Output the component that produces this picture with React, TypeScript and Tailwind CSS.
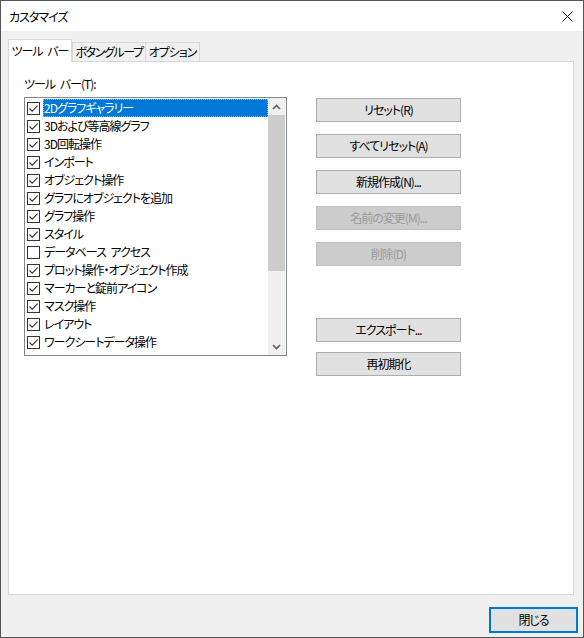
const FONT = "font-['Noto_Sans_CJK_JP','Noto_Sans',sans-serif] [font-feature-settings:'palt'] tracking-[-1px] [word-spacing:3px]";

type Item = { label: string; checked: boolean };

const ITEMS: Item[] = [
  { label: "2Dグラフギャラリー", checked: true },
  { label: "3Dおよび等高線グラフ", checked: true },
  { label: "3D回転操作", checked: true },
  { label: "インポート", checked: true },
  { label: "オブジェクト操作", checked: true },
  { label: "グラフにオブジェクトを追加", checked: true },
  { label: "グラフ操作", checked: true },
  { label: "スタイル", checked: true },
  { label: "データベース アクセス", checked: false },
  { label: "プロット操作・オブジェクト作成", checked: true },
  { label: "マーカーと錠前アイコン", checked: true },
  { label: "マスク操作", checked: true },
  { label: "レイアウト", checked: true },
  { label: "ワークシートデータ操作", checked: true },
];

function CheckBox({ checked }: { checked: boolean }) {
  return (
    <span className="flex h-[13px] w-[13px] shrink-0 items-center justify-center border border-[#333333] bg-white">
      {checked && (
        <svg width="11" height="11" viewBox="0 0 11 11" aria-hidden>
          <path d="M1.5 5.5 L4.2 8.2 L9.6 2.6" stroke="#333333" strokeWidth="1.1" fill="none" />
        </svg>
      )}
    </span>
  );
}

function Button({ label, disabled = false }: { label: string; disabled?: boolean }) {
  return (
    <div
      className={
        disabled
          ? "flex h-[24px] w-[145px] items-center justify-center whitespace-nowrap border border-[#bfbfbf] bg-[#cccccc] text-[12px] text-[#9a9a9a]"
          : "flex h-[24px] w-[145px] items-center justify-center whitespace-nowrap border border-[#adadad] bg-[#e1e1e1] text-[12px] text-black"
      }
    >
      {label}
    </div>
  );
}

function ScrollBar() {
  return (
    <div className="flex h-full w-[17px] shrink-0 flex-col bg-[#f0f0f0]">
      <div className="flex h-[17px] items-center justify-center">
        <svg width="9" height="6" viewBox="0 0 9 6" aria-hidden>
          <path d="M1 5 L4.5 1.5 L8 5" stroke="#606060" strokeWidth="1.6" fill="none" />
        </svg>
      </div>
      <div className="h-[156px] bg-[#cdcdcd]" />
      <div className="flex-1" />
      <div className="flex h-[17px] items-center justify-center">
        <svg width="9" height="6" viewBox="0 0 9 6" aria-hidden>
          <path d="M1 1 L4.5 4.5 L8 1" stroke="#606060" strokeWidth="1.6" fill="none" />
        </svg>
      </div>
    </div>
  );
}

export default function App() {
  return (
    <div className={`flex h-[638px] w-[584px] flex-col border border-[#555555] bg-[#f0f0f0] text-[12px] text-black ${FONT}`}>
      {/* title bar */}
      <div className="flex h-[30px] shrink-0 items-center justify-between bg-white pl-[8px] pr-[10px]">
        <span className="leading-[15px]">カスタマイズ</span>
        <svg width="11" height="11" viewBox="0 0 11 11" aria-hidden>
          <path d="M0.5 0.5 L10.5 10.5 M10.5 0.5 L0.5 10.5" stroke="#111111" strokeWidth="1" fill="none" />
        </svg>
      </div>

      <div className="flex flex-1 flex-col pt-[8px]">
        {/* tabs */}
        <div className="ml-[7px] flex h-[22px] items-end whitespace-nowrap">
          <div className="relative z-10 -mb-px flex h-[23px] w-[64px] items-center justify-center border border-b-0 border-[#d9d9d9] bg-white pb-[1px]">
            ツール バー
          </div>
          <div className="flex h-[19px] w-[74px] items-center justify-center border border-b-0 border-[#d9d9d9] tracking-[-1.4px]">
            ボタングループ
          </div>
          <div className="flex h-[19px] w-[54px] items-center justify-center border border-b-0 border-l-0 border-[#d9d9d9]">
            オプション
          </div>
        </div>

        {/* panel */}
        <div className="ml-[7px] h-[534px] w-[566px] border border-[#d9d9d9] bg-white pl-[15px] pt-[14px]">
          <div className="mb-[6px] leading-[15px]">ツール バー(T):</div>
          <div className="flex items-start">
            <div className="flex h-[259px] w-[263px] border border-[#828790] bg-white pr-[1px]">
              <div className="flex flex-1 flex-col overflow-hidden pl-[2px] pt-[1px]">
                {ITEMS.map((item, i) => (
                  <div key={item.label} className="flex h-[18px] shrink-0 items-center gap-[3px] whitespace-nowrap">
                    <CheckBox checked={item.checked} />
                    <span
                      className={
                        i === 0
                          ? "flex h-[18px] flex-1 items-center bg-[#0078d7] pl-[1px] text-white outline-1 -outline-offset-1 outline-dotted outline-[#f0a040]"
                          : "flex h-[18px] flex-1 items-center pl-[1px]"
                      }
                    >
                      {item.label}
                    </span>
                  </div>
                ))}
              </div>
              <ScrollBar />
            </div>

            <div className="ml-[29px] flex flex-col pt-[1px]">
              <div className="flex flex-col gap-[12px]">
                <Button label="リセット(R)" />
                <Button label="すべてリセット(A)" />
                <Button label="新規作成(N)..." />
                <Button label="名前の変更(M)..." disabled />
                <Button label="削除(D)" disabled />
              </div>
              <div className="mt-[52px] flex flex-col gap-[10px]">
                <Button label="エクスポート..." />
                <Button label="再初期化" />
              </div>
            </div>
          </div>
        </div>

        {/* footer */}
        <div className="mr-[5px] mt-[12px] flex justify-end">
          <div className="flex h-[26px] w-[89px] items-center justify-center border-2 border-[#0078d7] bg-[#e1e1e1]">
            閉じる
          </div>
        </div>
      </div>
    </div>
  );
}
